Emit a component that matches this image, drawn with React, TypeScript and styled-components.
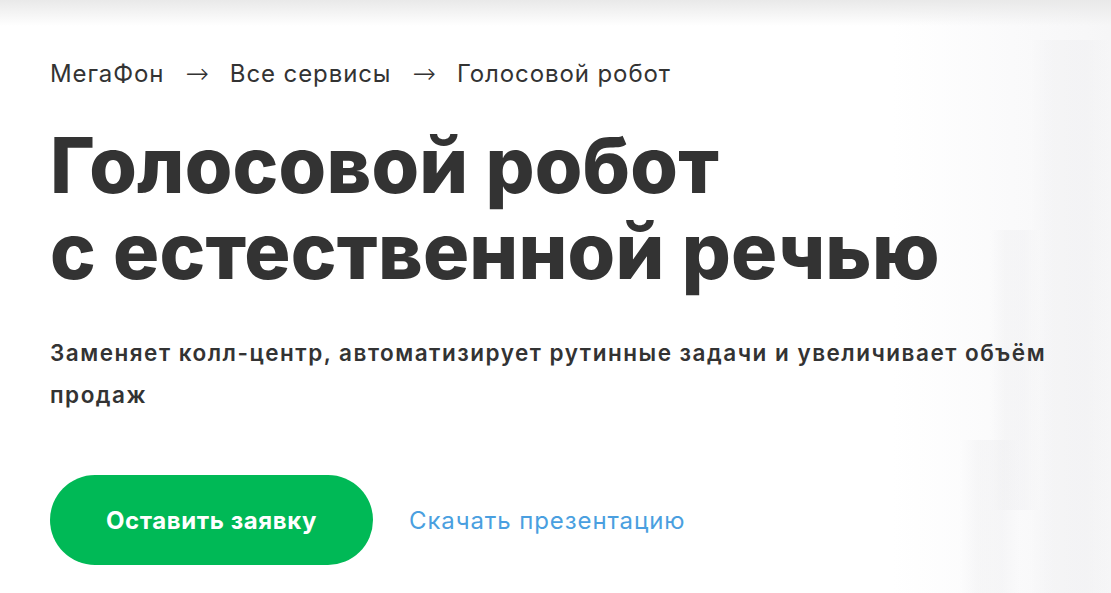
import React from "react";
import styled, { createGlobalStyle } from "styled-components";

const Global = createGlobalStyle`
  html, body { margin: 0; padding: 0; background: #fff; }
  body { font-family: Inter, "Noto Sans", sans-serif; color: #333; }
`;

const Page = styled.div`
  position: relative;
  width: 1111px;
  height: 593px;
  overflow: hidden;
  background: #fff;
`;

const TopShade = styled.div`
  position: absolute;
  left: 0; right: 0; top: 0;
  height: 26px;
  background: linear-gradient(#e9e9e9, rgba(255,255,255,0));
  pointer-events: none;
`;

const Backdrop = styled.div`
  position: absolute;
  top: 0; right: 0; bottom: 0;
  width: 220px;
  background: linear-gradient(90deg, rgba(255,255,255,0) 0%, #fafafb 55%, #f6f6f7 100%);
  pointer-events: none;
`;

const Pillar = styled.div<{ $l: number; $t: number; $w: number; $h: number }>`
  position: absolute;
  left: ${p => p.$l}px;
  top: ${p => p.$t}px;
  width: ${p => p.$w}px;
  height: ${p => p.$h}px;
  background: linear-gradient(90deg, rgba(238,238,240,0.0), rgba(238,238,240,0.4) 30%, rgba(238,238,240,0.4) 70%, rgba(238,238,240,0.0));
  pointer-events: none;
`;

const Content = styled.div`
  position: relative;
  display: flex;
  flex-direction: column;
  padding: 58px 0 0 50px;
`;

const Crumbs = styled.nav`
  display: flex;
  align-items: center;
  gap: 21px;
  font-size: 24px;
  line-height: 32px;
  color: #333;
  letter-spacing: 0.9px;
`;

const Arrow = styled.span`
  font-family: "DejaVu Sans", sans-serif;
  font-weight: 200;
  font-size: 28px;
  line-height: 32px;
  letter-spacing: 0;
  color: #333;
`;

const Title = styled.h1`
  margin: 32px 0 0;
  font-size: 77px;
  line-height: 86px;
  font-weight: 800;
  color: #333;
  letter-spacing: 0.2px;
`;

const Lead = styled.p`
  margin: 38px 0 0;
  max-width: 1030px;
  font-size: 22.5px;
  line-height: 42px;
  font-weight: 600;
  color: #333;
  letter-spacing: 1.5px;
`;

const Actions = styled.div`
  display: flex;
  align-items: center;
  gap: 36px;
  margin-top: 59px;
`;

const PrimaryButton = styled.button`
  width: 323px;
  height: 90px;
  border: none;
  border-radius: 45px;
  background: #00b956;
  color: #fff;
  font-family: inherit;
  font-size: 24px;
  font-weight: 700;
  letter-spacing: 0.6px;
  cursor: pointer;
`;

const TextLink = styled.a`
  font-size: 24px;
  letter-spacing: 0.9px;
  color: #4a9fe0;
  text-decoration: none;
  cursor: pointer;
`;

export default function App() {
  return (
    <Page>
      <Global />
      <Backdrop />
      <Pillar $l={1030} $t={40} $w={81} $h={553} />
      <Pillar $l={990} $t={230} $w={50} $h={280} />
      <Pillar $l={960} $t={440} $w={60} $h={153} />
      <TopShade />
      <Content>
        <Crumbs>
          <span>МегаФон</span>
          <Arrow>→</Arrow>
          <span>Все сервисы</span>
          <Arrow>→</Arrow>
          <span>Голосовой робот</span>
        </Crumbs>
        <Title>
          Голосовой робот
          <br />
          с естественной речью
        </Title>
        <Lead>Заменяет колл-центр, автоматизирует рутинные задачи и увеличивает объём продаж</Lead>
        <Actions>
          <PrimaryButton>Оставить заявку</PrimaryButton>
          <TextLink>Скачать презентацию</TextLink>
        </Actions>
      </Content>
    </Page>
  );
}
